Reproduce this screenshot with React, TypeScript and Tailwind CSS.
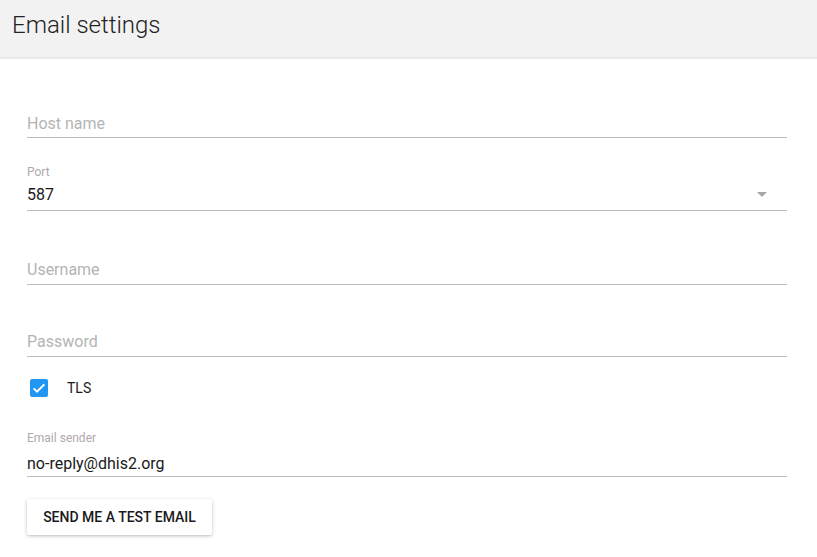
import React from "react";

export default function App() {
  return (
    <div className="w-[817px] h-[557px] bg-white overflow-hidden" style={{ fontFamily: "Roboto, 'Liberation Sans', sans-serif" }}>
      <div className="h-[58px] bg-[#f2f2f2] pl-[12px] pt-[9px] shadow-[0_1px_1px_rgba(0,0,0,0.08)] border-b border-[#e6e6e6]">
        <h1 className="text-[24px] leading-8 font-light text-[#222]">Email settings</h1>
      </div>
      <div className="pl-[27px] pr-[30px]">
        {/* Host name */}
        <div className="mt-[54px] border-b border-[#bdbdbd]">
          <div className="text-[16px] leading-6 text-[#b4b4b4] mb-[1px]">Host name</div>
        </div>
        {/* Port */}
        <div className="mt-[26px] border-b border-[#bdbdbd] relative">
          <div className="text-[12px] leading-4 text-[#b0a8ae]">Port</div>
          <div className="text-[16px] leading-6 text-[#1a1a1a] mt-[3px] mb-[3px]">587</div>
          <div className="absolute right-[20px] top-[28px] w-0 h-0 border-l-[5px] border-r-[5px] border-t-[5px] border-l-transparent border-r-transparent border-t-[#a8a8a8]" />
        </div>
        {/* Username */}
        <div className="mt-[47px] border-b border-[#bdbdbd]">
          <div className="text-[16px] leading-6 text-[#b4b4b4] mb-[2px]">Username</div>
        </div>
        {/* Password */}
        <div className="mt-[45px] border-b border-[#bdbdbd]">
          <div className="text-[16px] leading-6 text-[#b4b4b4] mb-[2px]">Password</div>
        </div>
        {/* TLS */}
        <div className="mt-[22px] flex items-center h-[18px]">
          <div className="ml-[3px] w-[18px] h-[18px] rounded-[2px] bg-[#2196f3] flex items-center justify-center">
            <svg width="16" height="16" viewBox="0 0 24 24">
              <path d="M4 12.5l5 5L20 6.5" fill="none" stroke="white" strokeWidth="3" />
            </svg>
          </div>
          <span className="ml-[19px] text-[14px] text-[#1a1a1a]">TLS</span>
        </div>
        {/* Email sender */}
        <div className="mt-[33px] border-b border-[#bdbdbd]">
          <div className="text-[12px] leading-4 text-[#b0a8ae]">Email sender</div>
          <div className="text-[16px] leading-6 text-[#1a1a1a] mt-[6px]">no-reply@dhis2.org</div>
        </div>
        <button className="mt-[22px] w-[185px] h-[36px] bg-white rounded-[2px] shadow-[0_1px_4px_rgba(0,0,0,0.18),0_1px_2px_rgba(0,0,0,0.1)] text-[14px] font-medium text-[#1a1a1a] uppercase">
          Send me a test email
        </button>
      </div>
    </div>
  );
}
